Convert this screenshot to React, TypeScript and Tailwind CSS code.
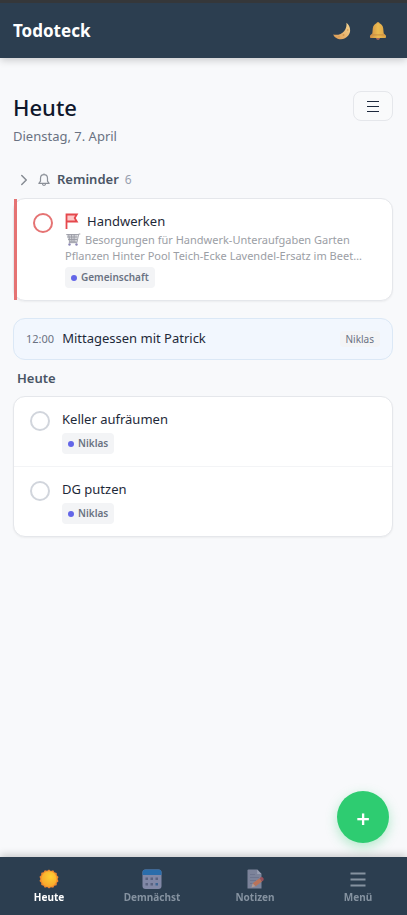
import React, { useState } from "react";
import { ChevronRight } from "lucide-react";

type Task = {
  id: string;
  title: string;
  project: string;
  note?: string;
  urgent?: boolean;
};

type Tab = {
  label: string;
  icon: React.ReactNode;
};

const reminders: Task[] = [
  {
    id: "handwerken",
    title: "Handwerken",
    project: "Gemeinschaft",
    note: "Besorgungen für Handwerk-Unteraufgaben Garten Pflanzen Hinter Pool Teich-Ecke Lavendel-Ersatz im Beet…",
    urgent: true,
  },
];

const tasks: Task[] = [
  { id: "keller", title: "Keller aufräumen", project: "Niklas" },
  { id: "dg", title: "DG putzen", project: "Niklas" },
];

const MoonIcon = () => (
  <svg width="18" height="18" viewBox="0 0 18 18" aria-hidden="true">
    <defs>
      <linearGradient id="moon" x1="1" y1="0" x2="0" y2="1">
        <stop offset="0" stopColor="#f5d795" />
        <stop offset="1" stopColor="#dc9850" />
      </linearGradient>
    </defs>
    <path
      d="M13.400.800c4 3 5 8.800 1.900 12.800-2.900 3.900-8.400 4.900-12.300 2.200C1.700 15 .8 14 .2 12.500c4.200 1 8.400-.3 10.900-3.300 2-2.400 2.700-5.200 2.300-8.400z"
      fill="url(#moon)"
    />
    <circle cx="14.700" cy="8" r="0.800" fill="#d2954f" />
    <circle cx="10.500" cy="13" r="1" fill="#d2954f" />
    <circle cx="6" cy="14.800" r="0.700" fill="#d2954f" />
  </svg>
);

const GoldBellIcon = () => (
  <svg width="18" height="18" viewBox="0 0 18 18" aria-hidden="true">
    <defs>
      <linearGradient id="bell" x1="0" y1="0" x2="1" y2="0">
        <stop offset="0" stopColor="#cf8c45" />
        <stop offset=".5" stopColor="#ecbc50" />
        <stop offset="1" stopColor="#dba045" />
      </linearGradient>
    </defs>
    <circle cx="9" cy="16.200" r="1.800" fill="#a8655a" />
    <circle cx="9" cy="1.600" r="1.600" fill="#d9a04e" />
    <path
      d="M9 1.200c3 0 4.900 2 5.200 5l.5 5.300 2 1.700c.6.500.4 2.900-.4 2.900H1.700c-.8 0-1-2.400-.4-2.900l2-1.700.5-5.300c.3-3 2.200-5 5.200-5z"
      fill="url(#bell)"
    />
    <path d="M2.800 12.900h12.400" stroke="#c07c40" strokeWidth="0.700" />
  </svg>
);

const OutlineBellIcon = () => (
  <svg
    className="ml-1"
    width="14"
    height="14"
    viewBox="0 0 14 14"
    fill="none"
    stroke="#8b9098"
    strokeWidth="1.200"
    strokeLinejoin="round"
    aria-hidden="true"
  >
    <path d="M7 1.600c-2.200 0-3.500 1.600-3.500 3.800v2.800L1.900 10.400h10.200l-1.600-2.200V5.400c0-2.200-1.300-3.800-3.500-3.800zM7 .5v1.100M5.400 10.600c0 2.500 3.200 2.500 3.200 0" />
  </svg>
);

const MenuIcon = () => (
  <svg width="16" height="16" viewBox="0 0 16 16" aria-hidden="true">
    <path d="M2 3.500h12M2 8.500h12M2 13.500h12" stroke="currentColor" strokeWidth="1.200" />
  </svg>
);

const TabMenuIcon = () => (
  <svg width="20" height="20" viewBox="0 0 20 20" aria-hidden="true">
    <path
      d="M2.500 4.500h15M2.500 10.500h15M2.500 16.500h15"
      stroke="currentColor"
      strokeWidth="1.800"
    />
  </svg>
);

const FlagIcon = () => (
  <svg width="14" height="17" viewBox="0 0 14 17" aria-hidden="true">
    <path d="M1.500 2h10L9.300 4.800l2.200 3.200h-10z" fill="#fdc9c9" />
    <path
      d="M1.500 16V1.500h10.300L9.700 5l2.100 3.500H1.500"
      fill="none"
      stroke="#e5484d"
      strokeWidth="1.800"
    />
  </svg>
);

const CartIcon = () => (
  <svg
    className="mr-1 inline-block align-[-2px]"
    width="16"
    height="13"
    viewBox="0 0 16 13"
    aria-hidden="true"
  >
    <path d="M1.500 1.500h11L11.500 9H4z" fill="#d2d3d8" />
    <path
      d="M15.300 1h-1.600l-1.800 8.700H3.800M1.300 1.500h11.900M2.200 4h10.400M3 6.500h9M4 9h7.500M3.700 1.500L5 9M6.400 1.500L7 9M9.200 1.500L9 9"
      fill="none"
      stroke="#9a9ba5"
      strokeWidth="0.900"
    />
    <circle cx="4.500" cy="11.500" r="1.200" fill="#8a86b4" />
    <circle cx="11.500" cy="11.500" r="1.200" fill="#8a86b4" />
  </svg>
);

const SunIcon = () => (
  <svg width="20" height="20" viewBox="0 0 20 20" aria-hidden="true">
    <defs>
      <radialGradient id="sun" cx=".6" cy=".35" r=".65">
        <stop offset="0" stopColor="#ffd034" />
        <stop offset="1" stopColor="#f9a72b" />
      </radialGradient>
    </defs>
    <path
      d="M10 .5l1.900 1.400 2.300-.6 1.200 2 2.300.6.100 2.300 1.700 1.700-.9 2.100.9 2.200-1.700 1.600-.1 2.400-2.300.5-1.200 2-2.300-.5L10 19.500l-1.900-1.400-2.300.6-1.200-2-2.300-.6-.1-2.300L.5 12.100l.9-2.100-.9-2.200 1.700-1.600.1-2.400 2.300-.5 1.200-2 2.300.5z"
      fill="#f28a2e"
    />
    <circle cx="10" cy="10" r="7.700" fill="url(#sun)" />
  </svg>
);

const CalendarIcon = () => (
  <svg width="20" height="20" viewBox="0 0 20 20" aria-hidden="true">
    <rect x=".5" y=".5" width="19" height="19.500" rx="3" fill="#8188a6" />
    <path d="M.5 6V3.500a3 3 0 013-3h13a3 3 0 013 3V6z" fill="#2a6dab" />
    <path
      d="M3.500 8.500H6V11H3.500zM8.500 8.500H11V11H8.500zM13.500 8.500H16V11h-2.500zM3.500 14H6v2.500H3.500zM8.500 14H11v2.500H8.500z"
      fill="#5a6380"
    />
    <path d="M13.500 14H16v2.500h-2.500z" fill="#3d6695" />
  </svg>
);

const NoteIcon = () => (
  <svg width="20" height="20" viewBox="0 0 20 20" aria-hidden="true">
    <path d="M3.500.5h8.700L16.500 5v14.500h-14v-18a1 1 0 011-1z" fill="#7c839a" />
    <path d="M12.200.5L16.500 5h-4.300z" fill="#9aa0b3" />
    <path
      d="M5 5.500h5M5 8.500h9M5 11.500h6M5 14.500h3"
      stroke="#6c748c"
      strokeWidth="0.900"
    />
    <path d="M6.500 18.500l1.200-4.200 2.900 2.900z" fill="#b09a94" />
    <path d="M7.700 14.300l6.800-5.100 2.500 3.300-6.400 4.700z" fill="#b9735a" />
    <path d="M14.500 9.200l1.300-1c1.500-.9 3.700 1.400 2.600 3.100L17 12.500z" fill="#98505b" />
  </svg>
);

const tabs: Tab[] = [
  { label: "Heute", icon: <SunIcon /> },
  { label: "Demnächst", icon: <CalendarIcon /> },
  { label: "Notizen", icon: <NoteIcon /> },
  { label: "Menü", icon: <TabMenuIcon /> },
];

const TaskRow = ({ task }: { task: Task }) => {
  const [done, setDone] = useState(false);

  return (
    <li
      className={`flex gap-3 px-4 py-3 ${
        task.urgent ? "border-l-3 border-[#e57373]" : ""
      }`}
    >
      <input
        id={task.id}
        type="checkbox"
        checked={done}
        onChange={() => setDone(!done)}
        className={`mt-0.5 size-5 shrink-0 appearance-none rounded-full border-2 bg-white checked:bg-gray-300 ${
          task.urgent ? "border-[#e57373]" : "border-gray-300"
        }`}
      />
      <div className="min-w-0 flex-1">
        <label
          htmlFor={task.id}
          className="flex h-[21px] items-center text-[13px] text-gray-800"
        >
          {task.urgent && (
            <span className="mr-2">
              <FlagIcon />
            </span>
          )}
          {task.title}
        </label>
        {task.note && (
          <p className="text-[11px] leading-4 text-[#9b9ea5]">
            <CartIcon />
            {task.note}
          </p>
        )}
        <span className="mt-[3px] flex h-[21px] w-fit items-center gap-1 rounded bg-gray-100 px-1.5 text-[10px] font-semibold text-gray-500">
          <span className="size-1.5 rounded-full bg-[#6366e8]" />
          {task.project}
        </span>
      </div>
    </li>
  );
};

const App = () => {
  const [active, setActive] = useState("Heute");

  return (
    <div className="flex min-h-screen flex-col bg-[#f8f9fb] font-['Noto_Sans',sans-serif] text-gray-900">
      {/* HEADER */}
      <header className="sticky top-0 z-10 flex h-[58px] items-center justify-between border-t-3 border-[#35373a] bg-[#2c3e50] px-[13px] shadow-[0_2px_8px_rgba(0,0,0,0.2)]">
        <span className="text-[17px] font-bold text-white">Todoteck</span>
        <div className="flex gap-[18px] pr-[7px]">
          <button aria-label="Dunkles Design">
            <MoonIcon />
          </button>
          <button aria-label="Mitteilungen">
            <GoldBellIcon />
          </button>
        </div>
      </header>

      <main className="flex-1 pt-8 pr-3.5 pb-20 pl-[13px]">
        <div className="flex items-start justify-between">
          <div>
            <h1 className="mb-0.5 text-[22px] leading-[34px] font-medium text-slate-900">
              Heute
            </h1>
            <p className="text-[13px] leading-5 text-gray-500">Dienstag, 7. April</p>
          </div>
          <button
            aria-label="Ansicht"
            className="mt-px flex h-[30px] w-10 items-center justify-center rounded-lg border border-gray-200 bg-gray-50 text-slate-800"
          >
            <MenuIcon />
          </button>
        </div>

        {/* REMINDER */}
        <section>
          <button className="mt-6 flex h-5 items-center pl-0.5 text-[13px]">
            <ChevronRight size={18} strokeWidth={2} className="text-[#868b93]" />
            <OutlineBellIcon />
            <span className="ml-1.5 font-semibold text-gray-600">Reminder</span>
            <span className="ml-1.5 text-xs text-gray-400">6</span>
          </button>
          <ul className="mt-2 rounded-xl border border-gray-200 bg-white shadow-xs">
            {reminders.map((task) => (
              <TaskRow key={task.id} task={task} />
            ))}
          </ul>
        </section>

        {/* TERMIN */}
        <section className="mt-[17px] flex h-[42px] items-center gap-2 rounded-xl border border-[#dbe8f6] bg-[#f2f7fe] px-3">
          <time className="text-[11px] text-gray-500">12:00</time>
          <span className="flex-1 text-[13px] text-gray-800">Mittagessen mit Patrick</span>
          <span className="rounded bg-[#f3f4f6] px-1.5 text-[10px] leading-4 text-gray-500">
            Niklas
          </span>
        </section>

        <section>
          <h2 className="mt-2 pl-1 text-[13px] leading-5 font-semibold text-gray-600">
            Heute
          </h2>
          <ul className="mt-2 divide-y divide-gray-100 rounded-xl border border-gray-200 bg-white shadow-xs">
            {tasks.map((task) => (
              <TaskRow key={task.id} task={task} />
            ))}
          </ul>
        </section>
      </main>

      <button
        aria-label="Neue Aufgabe"
        className="fixed right-[18px] bottom-[72px] z-10 flex size-13 items-center justify-center rounded-full bg-[#2ecc71] pt-1 text-2xl font-semibold text-white shadow-[0_4px_12px_rgba(46,204,113,0.35)]"
      >
        +
      </button>

      {/* NAVIGATION */}
      <nav className="fixed inset-x-0 bottom-0 grid h-[58px] grid-cols-4 gap-[5px] bg-[#2c3e50] shadow-[0_-2px_8px_rgba(0,0,0,0.2)]">
        {tabs.map((tab) => (
          <button
            key={tab.label}
            onClick={() => setActive(tab.label)}
            className={`flex flex-col items-center justify-center gap-0.5 text-[10px] leading-3 font-bold ${
              active === tab.label ? "text-white" : "text-[#8592a0]"
            }`}
          >
            {tab.icon}
            {tab.label}
          </button>
        ))}
      </nav>
    </div>
  );
};

export default App;
